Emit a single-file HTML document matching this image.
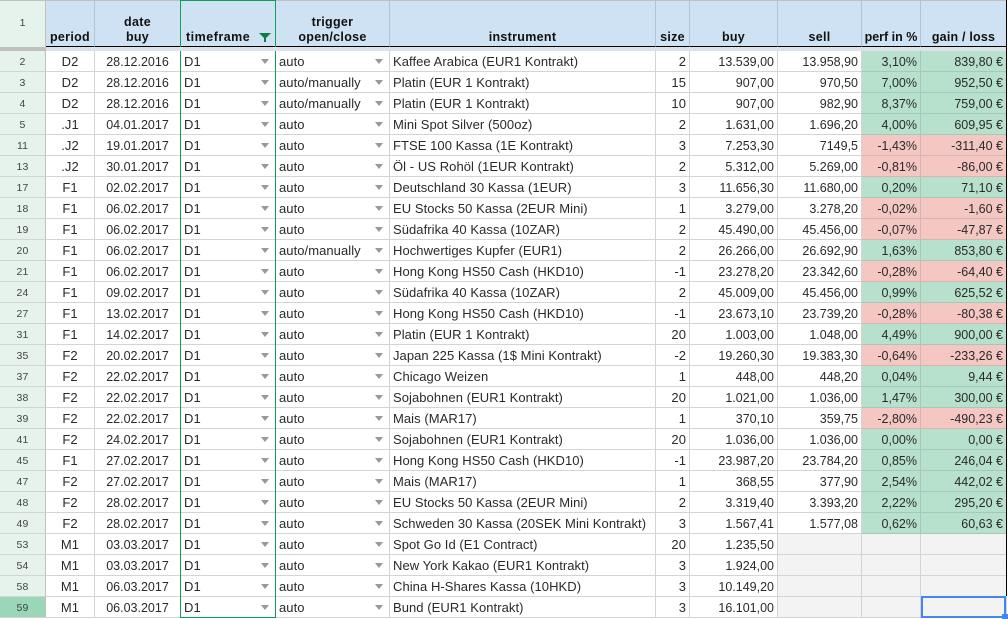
<!DOCTYPE html>
<html><head><meta charset="utf-8"><style>
html,body{margin:0;padding:0;width:1008px;height:619px;overflow:hidden;background:#fff}
body{position:relative;font-family:"Liberation Sans",Arial,sans-serif;font-size:13px;letter-spacing:.06px;color:#2a2a2a}
table{position:absolute;left:0;top:0;border-collapse:separate;border-spacing:0;table-layout:fixed;width:1007px}
td,th{box-sizing:border-box;padding:2px 3px 0;white-space:nowrap;overflow:hidden;border-right:1px solid #d4d4d4;border-bottom:1px solid #d4d4d4;height:21px;line-height:18px;font-weight:400}
tr.h th{height:47px;background:#cfe2f3;border-right:1px solid #b0c4d6;border-bottom:1px solid #000;border-top:1px solid #c0c0c0;vertical-align:bottom;text-align:center;font-weight:700;font-size:12.5px;line-height:15px;letter-spacing:.3px;padding:0 0 1px;color:#111}
tr.h th:first-child{background:#e5f3ec;border-right:1px solid #c0c0c0;border-bottom:1px solid #e5f3ec;font-weight:400;font-size:10.5px;color:#444;vertical-align:middle;letter-spacing:0;padding-bottom:0}
tr.g td{height:4px;line-height:0;font-size:0;padding:0;background:#dde1e8;border:0}
tr.g td:first-child{background:#c0c0c0}
td:nth-child(1){background:#e5f3ec;border-right:1px solid #c0c0c0;text-align:center;font-size:10.5px;color:#444;letter-spacing:.1px}
td:nth-child(2),td:nth-child(3){text-align:center}
td:nth-child(3),td:nth-child(8),td:nth-child(9),td:nth-child(10),td:nth-child(11){font-size:12.5px;letter-spacing:0}
td:nth-child(4),td:nth-child(5){position:relative}
td:nth-child(4)::after,td:nth-child(5)::after{content:"";position:absolute;right:6px;top:8px;border-left:4px solid transparent;border-right:4px solid transparent;border-top:5px solid #999}
td:nth-child(7),td:nth-child(8),td:nth-child(9),td:nth-child(10),td:nth-child(11){text-align:right}
.p{background:#b7e1cd;border-right-color:#a5c9b8;border-bottom-color:#a5c9b8}
.n{background:#f4c7c3;border-right-color:#d8b3af;border-bottom-color:#d8b3af}
.e{background:#f3f3f3}
td.s{background:#9ad7b8}
.v{position:absolute;width:1px;background:#0f9d58;top:0}
.b{position:absolute;background:#000}
.sel{position:absolute;left:921px;top:596px;width:85px;height:22px;box-sizing:border-box;border:2px solid #4285f4}
.hd{position:absolute;left:1002px;top:614px;width:6px;height:5px;background:#4285f4}
.f{position:absolute;left:259px;top:33px;width:0;height:0;border-left:6px solid transparent;border-right:6px solid transparent;border-top:6px solid #0f7b45}
.f2{position:absolute;left:264px;top:36px;width:2px;height:6px;background:#0f7b45}
</style></head><body>
<table>
<colgroup><col style="width:46px"><col style="width:49px"><col style="width:86px"><col style="width:95px"><col style="width:114px"><col style="width:266px"><col style="width:34px"><col style="width:88px"><col style="width:84px"><col style="width:59px"><col style="width:86px"></colgroup>
<tr class="h"><th>1</th><th>period</th><th>date<br>buy</th><th style="text-align:left;padding-left:5px;letter-spacing:.5px">timeframe</th><th>trigger<br>open/close</th><th>instrument</th><th>size</th><th>buy</th><th>sell</th><th style="letter-spacing:0">perf in %</th><th style="letter-spacing:.2px">gain / loss</th></tr>
<tr class="g"><td></td><td></td><td></td><td></td><td></td><td></td><td></td><td></td><td></td><td></td><td></td></tr>
<tr><td>2</td><td>D2</td><td>28.12.2016</td><td>D1</td><td>auto</td><td>Kaffee Arabica (EUR1 Kontrakt)</td><td>2</td><td>13.539,00</td><td>13.958,90</td><td class="p">3,10%</td><td class="p">839,80 €</td></tr>
<tr><td>3</td><td>D2</td><td>28.12.2016</td><td>D1</td><td>auto/manually</td><td>Platin (EUR 1 Kontrakt)</td><td>15</td><td>907,00</td><td>970,50</td><td class="p">7,00%</td><td class="p">952,50 €</td></tr>
<tr><td>4</td><td>D2</td><td>28.12.2016</td><td>D1</td><td>auto/manually</td><td>Platin (EUR 1 Kontrakt)</td><td>10</td><td>907,00</td><td>982,90</td><td class="p">8,37%</td><td class="p">759,00 €</td></tr>
<tr><td>5</td><td>.J1</td><td>04.01.2017</td><td>D1</td><td>auto</td><td>Mini Spot Silver (500oz)</td><td>2</td><td>1.631,00</td><td>1.696,20</td><td class="p">4,00%</td><td class="p">609,95 €</td></tr>
<tr><td>11</td><td>.J2</td><td>19.01.2017</td><td>D1</td><td>auto</td><td>FTSE 100 Kassa (1E Kontrakt)</td><td>3</td><td>7.253,30</td><td>7149,5</td><td class="n">-1,43%</td><td class="n">-311,40 €</td></tr>
<tr><td>13</td><td>.J2</td><td>30.01.2017</td><td>D1</td><td>auto</td><td>Öl - US Rohöl (1EUR Kontrakt)</td><td>2</td><td>5.312,00</td><td>5.269,00</td><td class="n">-0,81%</td><td class="n">-86,00 €</td></tr>
<tr><td>17</td><td>F1</td><td>02.02.2017</td><td>D1</td><td>auto</td><td>Deutschland 30 Kassa (1EUR)</td><td>3</td><td>11.656,30</td><td>11.680,00</td><td class="p">0,20%</td><td class="p">71,10 €</td></tr>
<tr><td>18</td><td>F1</td><td>06.02.2017</td><td>D1</td><td>auto</td><td>EU Stocks 50 Kassa (2EUR Mini)</td><td>1</td><td>3.279,00</td><td>3.278,20</td><td class="n">-0,02%</td><td class="n">-1,60 €</td></tr>
<tr><td>19</td><td>F1</td><td>06.02.2017</td><td>D1</td><td>auto</td><td>Südafrika 40 Kassa (10ZAR)</td><td>2</td><td>45.490,00</td><td>45.456,00</td><td class="n">-0,07%</td><td class="n">-47,87 €</td></tr>
<tr><td>20</td><td>F1</td><td>06.02.2017</td><td>D1</td><td>auto/manually</td><td>Hochwertiges Kupfer (EUR1)</td><td>2</td><td>26.266,00</td><td>26.692,90</td><td class="p">1,63%</td><td class="p">853,80 €</td></tr>
<tr><td>21</td><td>F1</td><td>06.02.2017</td><td>D1</td><td>auto</td><td>Hong Kong HS50 Cash (HKD10)</td><td>-1</td><td>23.278,20</td><td>23.342,60</td><td class="n">-0,28%</td><td class="n">-64,40 €</td></tr>
<tr><td>24</td><td>F1</td><td>09.02.2017</td><td>D1</td><td>auto</td><td>Südafrika 40 Kassa (10ZAR)</td><td>2</td><td>45.009,00</td><td>45.456,00</td><td class="p">0,99%</td><td class="p">625,52 €</td></tr>
<tr><td>27</td><td>F1</td><td>13.02.2017</td><td>D1</td><td>auto</td><td>Hong Kong HS50 Cash (HKD10)</td><td>-1</td><td>23.673,10</td><td>23.739,20</td><td class="n">-0,28%</td><td class="n">-80,38 €</td></tr>
<tr><td>31</td><td>F1</td><td>14.02.2017</td><td>D1</td><td>auto</td><td>Platin (EUR 1 Kontrakt)</td><td>20</td><td>1.003,00</td><td>1.048,00</td><td class="p">4,49%</td><td class="p">900,00 €</td></tr>
<tr><td>35</td><td>F2</td><td>20.02.2017</td><td>D1</td><td>auto</td><td>Japan 225 Kassa (1$ Mini Kontrakt)</td><td>-2</td><td>19.260,30</td><td>19.383,30</td><td class="n">-0,64%</td><td class="n">-233,26 €</td></tr>
<tr><td>37</td><td>F2</td><td>22.02.2017</td><td>D1</td><td>auto</td><td>Chicago Weizen</td><td>1</td><td>448,00</td><td>448,20</td><td class="p">0,04%</td><td class="p">9,44 €</td></tr>
<tr><td>38</td><td>F2</td><td>22.02.2017</td><td>D1</td><td>auto</td><td>Sojabohnen (EUR1 Kontrakt)</td><td>20</td><td>1.021,00</td><td>1.036,00</td><td class="p">1,47%</td><td class="p">300,00 €</td></tr>
<tr><td>39</td><td>F2</td><td>22.02.2017</td><td>D1</td><td>auto</td><td>Mais (MAR17)</td><td>1</td><td>370,10</td><td>359,75</td><td class="n">-2,80%</td><td class="n">-490,23 €</td></tr>
<tr><td>41</td><td>F2</td><td>24.02.2017</td><td>D1</td><td>auto</td><td>Sojabohnen (EUR1 Kontrakt)</td><td>20</td><td>1.036,00</td><td>1.036,00</td><td class="p">0,00%</td><td class="p">0,00 €</td></tr>
<tr><td>45</td><td>F1</td><td>27.02.2017</td><td>D1</td><td>auto</td><td>Hong Kong HS50 Cash (HKD10)</td><td>-1</td><td>23.987,20</td><td>23.784,20</td><td class="p">0,85%</td><td class="p">246,04 €</td></tr>
<tr><td>47</td><td>F2</td><td>27.02.2017</td><td>D1</td><td>auto</td><td>Mais (MAR17)</td><td>1</td><td>368,55</td><td>377,90</td><td class="p">2,54%</td><td class="p">442,02 €</td></tr>
<tr><td>48</td><td>F2</td><td>28.02.2017</td><td>D1</td><td>auto</td><td>EU Stocks 50 Kassa (2EUR Mini)</td><td>2</td><td>3.319,40</td><td>3.393,20</td><td class="p">2,22%</td><td class="p">295,20 €</td></tr>
<tr><td>49</td><td>F2</td><td>28.02.2017</td><td>D1</td><td>auto</td><td>Schweden 30 Kassa (20SEK Mini Kontrakt)</td><td>3</td><td>1.567,41</td><td>1.577,08</td><td class="p">0,62%</td><td class="p">60,63 €</td></tr>
<tr><td>53</td><td>M1</td><td>03.03.2017</td><td>D1</td><td>auto</td><td>Spot Go Id (E1 Contract)</td><td>20</td><td>1.235,50</td><td class="e"></td><td class="e"></td><td class="e"></td></tr>
<tr><td>54</td><td>M1</td><td>03.03.2017</td><td>D1</td><td>auto</td><td>New York Kakao (EUR1 Kontrakt)</td><td>3</td><td>1.924,00</td><td class="e"></td><td class="e"></td><td class="e"></td></tr>
<tr><td>58</td><td>M1</td><td>06.03.2017</td><td>D1</td><td>auto</td><td>China H-Shares Kassa (10HKD)</td><td>3</td><td>10.149,20</td><td class="e"></td><td class="e"></td><td class="e"></td></tr>
<tr><td class="s">59</td><td>M1</td><td>06.03.2017</td><td>D1</td><td>auto</td><td>Bund (EUR1 Kontrakt)</td><td>3</td><td>16.101,00</td><td class="e"></td><td class="e"></td><td class="e"></td></tr>
</table>
<div class="v" style="left:180px;height:47px"></div>
<div class="v" style="left:275px;height:47px"></div>
<div class="v" style="left:180px;top:51px;height:567px"></div>
<div class="v" style="left:275px;top:51px;height:567px"></div>
<div class="v" style="left:180px;width:96px;height:1px"></div>
<div class="v" style="left:180px;top:617px;width:96px;height:1px"></div>
<div class="b" style="left:1006px;top:0;width:1px;height:596px"></div>
<div class="f"></div><div class="f2"></div>
<div class="sel"></div><div class="hd"></div>
</body></html>
